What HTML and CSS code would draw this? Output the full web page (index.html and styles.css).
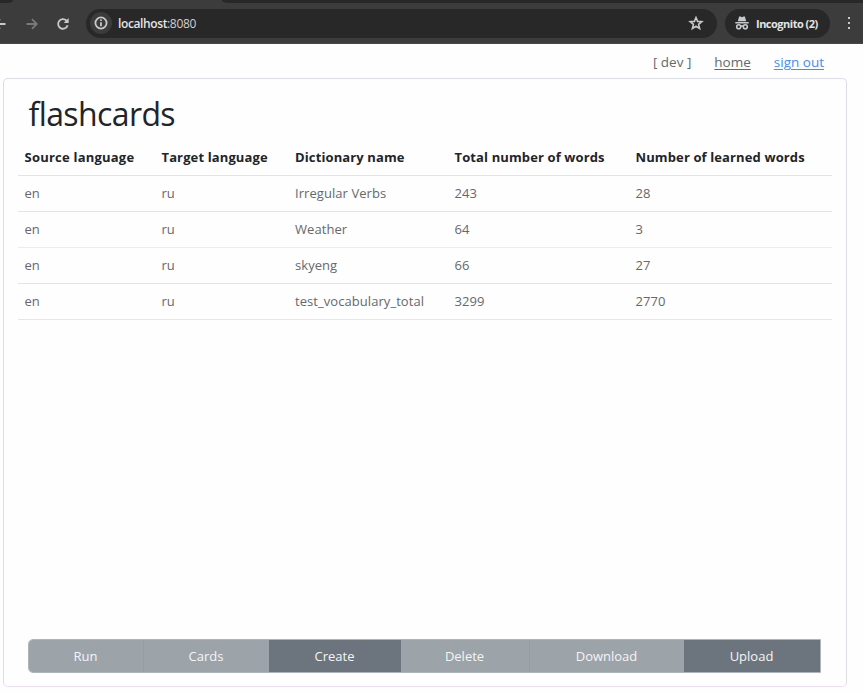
FILE: index.html
```
<!DOCTYPE html>
<html lang="en">
<head>
<meta charset="utf-8">
<title>flashcards</title>
<link rel="stylesheet" href="styles.css">
</head>
<body>
<div class="browser">
  <div class="tabs"><i class="tab-left"></i><i class="tab-right"></i></div>
  <div class="toolbar">
    <svg class="back" width="6" height="14" viewBox="0 0 6 14"><path d="M-6 7H5.500M0 2.200L-4.800 7 0 11.800" /></svg>
    <svg class="forward" width="12" height="14" viewBox="0 0 12 14"><path d="M.5 7h10M6 2.2L10.800 7 6 11.800"/></svg>
    <svg class="reload" width="14" height="14" viewBox="0 0 14 14"><path d="M11.600 8.200A4.800 4.800 0 1 1 10.300 3.500L12 5.200"/><path class="solid" d="M12.600 1v5H7.700z"/></svg>
    <div class="omnibox">
      <span class="site-info"><svg width="14" height="14" viewBox="0 0 14 14"><circle cx="7" cy="7" r="5.600"/><path d="M7 6.200v4M7 3.600v1.500"/></svg></span>
      <span class="url"><b>localhost</b>:8080</span>
      <svg class="star" width="16" height="16" viewBox="0 0 16 16"><path d="M8 2.500l1.600 3.900 4.200.3-3.200 2.700 1 4.100L8 11.300l-3.600 2.200 1-4.100-3.200-2.700 4.200-.3z"/></svg>
    </div>
    <div class="incognito">
      <svg width="14" height="14" viewBox="0 0 14 14"><path class="solid" d="M2.800 5.300L4.100.6h1.400L7 1.200 8.500.6h1.400l1.300 4.700z"/><path d="M.3 6.700h13.400M5.500 10.200q1.500-.8 3 0"/><circle cx="3.700" cy="10.700" r="2"/><circle cx="10.300" cy="10.700" r="2"/></svg>
      <span>Incognito (2)</span>
    </div>
    <div class="menu"><i></i><i></i><i></i></div>
  </div>
</div>
<nav class="links"><span class="user">[ dev ]</span><a class="home">home</a><a class="signout">sign out</a></nav>
<main class="panel">
  <h1><span>flashcards</span></h1>
  <table>
    <colgroup><col class="c1"><col class="c2"><col class="c3"><col class="c4"><col class="c5"></colgroup>
    <thead><tr><th class="wide">Source language</th><th>Target language</th><th>Dictionary name</th><th>Total number of words</th><th>Number of learned words</th></tr></thead>
    <tbody>
      <tr class="tinted"><td>en</td><td>ru</td><td>Irregular Verbs</td><td>243</td><td>28</td></tr>
      <tr class="pale"><td>en</td><td>ru</td><td>Weather</td><td>64</td><td>3</td></tr>
      <tr><td>en</td><td>ru</td><td>skyeng</td><td>66</td><td>27</td></tr>
      <tr class="last"><td>en</td><td>ru</td><td>test_vocabulary_total</td><td>3299</td><td>2770</td></tr>
    </tbody>
  </table>
  <div class="actions">
    <button class="run">Run</button><button class="cards">Cards</button><button class="create">Create</button><button class="delete">Delete</button><button class="download">Download</button><button class="upload">Upload</button>
  </div>
</main>
</body>
</html>
```

FILE: styles.css
```
* { box-sizing: border-box; }
body { margin: 0; height: 692px; overflow: hidden; display: flex; flex-direction: column; background: #fefefe; color: #212529; font-family: "Open Sans", "Noto Sans", sans-serif; font-size: 13px; }
svg { fill: none; stroke: #c7c9cb; stroke-width: 1.8; flex: none; }
svg .solid { fill: #c7c9cb; stroke: none; }

.browser { height: 44px; flex: none; background: #3c3c3c; border-bottom: 1px solid #484848; }
.tabs { height: 3px; display: flex; justify-content: space-between; }
.tab-left { width: 13px; background: #282828; border-bottom-right-radius: 5px 3px; }
.tab-right { width: 641px; background: #282828; border-bottom-left-radius: 6px 3px; }
.toolbar { height: 40px; display: flex; align-items: center; }
.toolbar > svg { position: relative; top: 0.5px; }
.forward { margin-left: 20px; stroke: #77797b; stroke-width: 1.8; }
.reload { margin-left: 18px; }
.omnibox { width: 631px; height: 29px; margin-left: 16px; padding: 0 13px 0 4px; border-radius: 15px; background: #282828; display: flex; align-items: center; }
.site-info { width: 22px; height: 22px; border-radius: 50%; background: #3c3c3c; display: flex; align-items: center; justify-content: center; }
.url { margin-left: 6px; color: #cfcfcf; font-size: 12px; letter-spacing: -.34px; }
.url b { font-weight: 600; color: #e4e4e4; letter-spacing: -.38px; }
.star { margin-left: auto; stroke-width: 1.6; }
.incognito { width: 105px; height: 29px; margin-left: 8px; padding-left: 10px; border-radius: 15px; background: #282828; display: flex; align-items: center; gap: 7px; color: #e4e4e4; font-size: 11px; font-weight: 700; letter-spacing: -.5px; white-space: nowrap; }
.incognito svg { stroke-width: 1.6; }
.menu { margin-left: 18px; display: flex; flex-direction: column; gap: 3px; }
.menu i { width: 2px; height: 2px; background: #c7c9cb; }

.links { height: 34px; flex: none; padding: 2px 39px 0 0; display: flex; justify-content: flex-end; align-items: center; font-size: 13.5px; color: #65696c; }
.links a { text-decoration: underline; text-underline-offset: 2px; }
.home { margin-left: 23px; }
.signout { margin-left: 23px; color: #478cf5; }

.panel { width: 844px; height: 609px; margin-left: 2.5px; padding: 0 14px; border: 1px solid #dddde7; border-bottom-color: #eddff0; border-radius: 5px; display: flex; flex-direction: column; }
h1 { height: 61px; margin: 0; padding: 13px 0 0 11px; font-size: 32px; line-height: 44px; font-weight: 400; letter-spacing: -.6px; }
table { width: 814px; table-layout: fixed; border-collapse: separate; border-spacing: 0; }
.c1 { width: 137px; }
.c2 { width: 133.5px; }
.c3 { width: 159.5px; }
.c4 { width: 181px; }
.c5 { width: 203px; }
th, td { height: 36px; padding: 0 7px 1px; border-bottom: 1px solid #e1e3e5; text-align: left; white-space: nowrap; line-height: 18px; }
th { font-weight: 700; letter-spacing: .12px; }
th.wide { letter-spacing: .22px; }
td { color: #65696c; letter-spacing: .06px; }
.tinted td { border-bottom-color: #eadff1; }
.pale td { border-bottom-color: #ebecee; }
.last td { border-bottom-color: #e5e5ed; }

.actions { width: 793px; height: 34px; margin: auto 0 13px 10px; display: flex; border: 1px solid #aeb4b8; border-radius: 5px 0 0 5px; overflow: hidden; }
button { height: 32px; margin: 0; padding: 0; border: 0; background: #9ca3a9; color: #f4f5f6; font: 500 13px "Open Sans", sans-serif; }
.run { width: 115px; border-right: 1px solid #949ca6; }
.cards { width: 125px; }
.create { width: 132px; background: #6c757d; }
.delete { width: 129px; border-right: 1px solid #949ca6; }
.download { width: 154px; }
.upload { width: 136px; background: #6c757d; }
```
